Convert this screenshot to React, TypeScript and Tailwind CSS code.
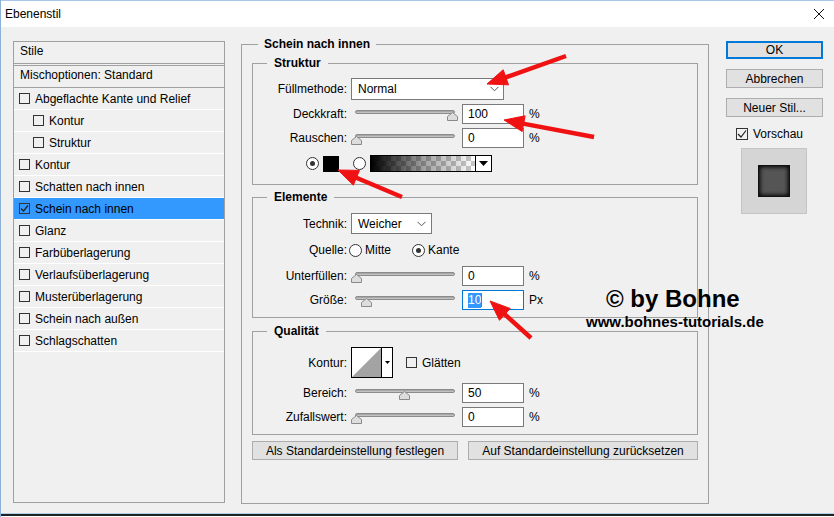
import React from 'react';

type StyleItem = { label: string; indent?: boolean; checked?: boolean; selected?: boolean };

const STYLES: StyleItem[] = [
  { label: 'Abgeflachte Kante und Relief' },
  { label: 'Kontur', indent: true },
  { label: 'Struktur', indent: true },
  { label: 'Kontur' },
  { label: 'Schatten nach innen' },
  { label: 'Schein nach innen', checked: true, selected: true },
  { label: 'Glanz' },
  { label: 'Farbüberlagerung' },
  { label: 'Verlaufsüberlagerung' },
  { label: 'Musterüberlagerung' },
  { label: 'Schein nach außen' },
  { label: 'Schlagschatten' },
];

// tail -> tip, in page pixels
const ARROWS = [
  { x1: 565, y1: 56, x2: 486, y2: 84 },
  { x1: 593, y1: 137, x2: 503, y2: 120 },
  { x1: 401, y1: 197, x2: 337, y2: 170 },
  { x1: 530, y1: 338, x2: 489, y2: 301 },
];

function Checkbox({ checked = false }: { checked?: boolean }) {
  return (
    <span className="flex h-[11px] w-[11px] shrink-0 items-center justify-center border border-[#333]">
      {checked && (
        <svg width="9" height="9" viewBox="0 0 9 9">
          <path d="M1 4.5 L3.5 7 L8 1.5" fill="none" stroke="#222" strokeWidth="1.2" />
        </svg>
      )}
    </span>
  );
}

function Radio({ checked = false }: { checked?: boolean }) {
  return (
    <span className="flex h-[13px] w-[13px] shrink-0 items-center justify-center rounded-full border border-[#333] bg-white">
      {checked && <span className="h-[5px] w-[5px] rounded-full bg-[#333]" />}
    </span>
  );
}

function Slider({ value }: { value: number }) {
  return (
    <div className="relative ml-[4px] h-[20px] w-[107px] shrink-0">
      <div className="absolute left-[4px] top-[6px] h-[4px] w-[100px] rounded-full border border-[#8c8c8c] bg-linear-to-b from-[#9a9a9a] to-[#cfcfcf]" />
      <svg
        className="absolute top-[8px]"
        style={{ left: (value / 100) * 96 }}
        width="11"
        height="9"
        viewBox="0 0 11 9"
      >
        <path d="M0.5 8.5 V4.5 L5.5 0.5 L10.5 4.5 V8.5 Z" fill="#dddddd" stroke="#8a8a8a" />
      </svg>
    </div>
  );
}

function NumField({ value, focused = false }: { value: string; focused?: boolean }) {
  return (
    <div
      className={`ml-[4px] flex h-[20px] w-[62px] shrink-0 items-center border bg-white pl-[5px] ${
        focused ? 'border-[#0078d7]' : 'border-[#7a7a7a]'
      }`}
    >
      {focused ? (
        <>
          <span className="bg-[#3399ff] leading-[15px] text-white">{value}</span>
          <span className="h-[14px] w-px bg-[#c06020]" />
        </>
      ) : (
        value
      )}
    </div>
  );
}

function SliderRow({
  label,
  value,
  unit,
  focused,
  className,
}: {
  label: string;
  value: number;
  unit: string;
  focused?: boolean;
  className: string;
}) {
  return (
    <div className={`flex h-[20px] items-center ${className}`}>
      <span className="w-[94px] shrink-0 text-right">{label}</span>
      <Slider value={value} />
      <NumField value={String(value)} focused={focused} />
      <span className="ml-[5px]">{unit}</span>
    </div>
  );
}

function Chevron() {
  return (
    <svg width="9" height="6" viewBox="0 0 9 6">
      <path d="M0.5 0.8 L4.5 4.8 L8.5 0.8" fill="none" stroke="#555" />
    </svg>
  );
}

function Legend({ children, outer = false }: { children: React.ReactNode; outer?: boolean }) {
  return (
    <legend className={`font-bold leading-[16px] ${outer ? 'ml-[16px] px-[6px]' : 'ml-[14px] px-[7px]'}`}>
      {children}
    </legend>
  );
}

function Button({ children, className }: { children: React.ReactNode; className: string }) {
  return (
    <div className={`flex h-[19px] items-center justify-center border border-[#adadad] bg-[#e1e1e1] ${className}`}>
      {children}
    </div>
  );
}

function StylesPanel() {
  return (
    <div className="mt-[5px] h-[462px] w-[212px] shrink-0 border border-[#a0a0a0] bg-[#f0f0f0]">
      <div className="flex h-[22px] items-center border-b border-[#a0a0a0] pb-[4px] pl-[6px]">Stile</div>
      <div className="mt-[1px] flex h-[23px] items-center border-y border-[#a0a0a0] pb-[4px] pl-[6px]">
        Mischoptionen: Standard
      </div>
      {STYLES.map((s, i) => (
        <div
          key={i}
          className={`flex h-[22px] items-center border-b border-white ${s.indent ? 'pl-[19px]' : 'pl-[5px]'} ${
            s.selected ? 'bg-[#3399ff]' : ''
          }`}
        >
          <Checkbox checked={s.checked} />
          <span className="ml-[5px]">{s.label}</span>
        </div>
      ))}
    </div>
  );
}

function Arrows() {
  return (
    <svg className="pointer-events-none absolute inset-0" width="834" height="517">
      {ARROWS.map((a, i) => {
        const dx = a.x2 - a.x1;
        const dy = a.y2 - a.y1;
        const len = Math.hypot(dx, dy);
        const ux = dx / len;
        const uy = dy / len;
        const bx = a.x2 - ux * 20;
        const by = a.y2 - uy * 20;
        const px = -uy * 8;
        const py = ux * 8;
        return (
          <g key={i} fill="#f01212" stroke="#f01212">
            <line x1={a.x1} y1={a.y1} x2={bx + ux * 2} y2={by + uy * 2} strokeWidth="4.5" />
            <polygon points={`${a.x2},${a.y2} ${bx + px},${by + py} ${bx - px},${by - py}`} strokeWidth="1" />
          </g>
        );
      })}
    </svg>
  );
}

export default function App() {
  return (
    <div className="relative h-[517px] w-[834px] overflow-hidden border-l border-[#8db2d8] font-['Liberation_Sans',Arial,sans-serif] text-[12px] leading-[14px] text-black">
      {/* title bar */}
      <div className="flex h-[27px] items-center justify-between border-t border-[#a9c8ea] bg-white pl-[4px] pr-[9px]">
        <span>Ebenenstil</span>
        <svg width="12" height="12" viewBox="0 0 12 12">
          <path d="M1 1 L11 11 M11 1 L1 11" stroke="#111" strokeWidth="1" />
        </svg>
      </div>

      {/* body */}
      <div className="flex h-[487px] items-start border-b border-[#b7cde3] bg-[#f0f0f0] pl-[12px] pt-[9px]">
        <StylesPanel />

        <fieldset className="ml-[16px] h-[468px] w-[468px] shrink-0 border border-[#a0a0a0]">
          <Legend outer>Schein nach innen</Legend>

          <fieldset className="ml-[10px] mt-[3px] w-[446px] border border-[#a0a0a0] pb-[12px]">
            <Legend>Struktur</Legend>
            <div className="mt-[7px] flex h-[22px] items-center">
              <span className="w-[94px] shrink-0 text-right">Füllmethode:</span>
              <div className="ml-[4px] flex h-[22px] w-[153px] items-center justify-between border border-[#7a7a7a] bg-white pl-[6px] pr-[4px]">
                <span>Normal</span>
                <Chevron />
              </div>
            </div>
            <SliderRow className="mt-[4px]" label="Deckkraft:" value={100} unit="%" />
            <SliderRow className="mt-[4px]" label="Rauschen:" value={0} unit="%" />
            <div className="mt-[7px] flex h-[17px] items-center pl-[53px]">
              <Radio checked />
              <span className="ml-[4px] h-[16px] w-[16px] bg-black" />
              <span className="ml-[14px]">
                <Radio />
              </span>
              <div className="ml-[4px] flex h-[17px] w-[122px] border border-black">
                <div className="flex-1 bg-[repeating-conic-gradient(#c9c9c9_0_25%,#ffffff_0_50%)] bg-[length:10px_10px]">
                  <div className="h-full w-full bg-linear-to-r from-black via-[#00000060] via-50% to-transparent" />
                </div>
                <div className="flex w-[16px] items-center justify-center border-l border-black bg-white">
                  <svg width="9" height="5" viewBox="0 0 9 5">
                    <path d="M0 0 H9 L4.5 5 Z" fill="#000" />
                  </svg>
                </div>
              </div>
            </div>
          </fieldset>

          <fieldset className="ml-[10px] mt-[4px] w-[446px] border border-[#a0a0a0] pb-[7px]">
            <Legend>Elemente</Legend>
            <div className="mt-[8px] flex h-[21px] items-center">
              <span className="w-[94px] shrink-0 text-right">Technik:</span>
              <div className="ml-[4px] flex h-[21px] w-[81px] items-center justify-between border border-[#7a7a7a] bg-white pl-[6px] pr-[5px]">
                <span>Weicher</span>
                <Chevron />
              </div>
            </div>
            <div className="mt-[7px] flex h-[18px] items-center">
              <span className="w-[94px] shrink-0 text-right">Quelle:</span>
              <span className="ml-[2px]">
                <Radio />
              </span>
              <span className="ml-[3px]">Mitte</span>
              <span className="ml-[21px]">
                <Radio checked />
              </span>
              <span className="ml-[3px]">Kante</span>
            </div>
            <SliderRow className="mt-[7px]" label="Unterfüllen:" value={0} unit="%" />
            <SliderRow className="mt-[4px]" label="Größe:" value={10} unit="Px" focused />
          </fieldset>

          <fieldset className="ml-[10px] mt-[5px] w-[446px] border border-[#a0a0a0] pb-[7px]">
            <Legend>Qualität</Legend>
            <div className="mt-[8px] flex h-[31px] items-center">
              <span className="w-[94px] shrink-0 text-right">Kontur:</span>
              <div className="ml-[4px] flex h-[31px] w-[42px] border border-black bg-white">
                <svg width="29" height="29" viewBox="0 0 29 29">
                  <path d="M0 29 L29 0 L29 29 Z" fill="#a3a3a3" />
                </svg>
                <div className="flex flex-1 items-center justify-center border-l border-black">
                  <svg width="5" height="3" viewBox="0 0 5 3">
                    <path d="M0 0 H5 L2.5 3 Z" fill="#000" />
                  </svg>
                </div>
              </div>
              <span className="ml-[13px]">
                <Checkbox />
              </span>
              <span className="ml-[5px]">Glätten</span>
            </div>
            <SliderRow className="mt-[5px]" label="Bereich:" value={50} unit="%" />
            <SliderRow className="mt-[4px]" label="Zufallswert:" value={0} unit="%" />
          </fieldset>

          <div className="ml-[10px] mt-[6px] flex gap-[10px]">
            <Button className="w-[206px]">Als Standardeinstellung festlegen</Button>
            <Button className="w-[230px]">Auf Standardeinstellung zurücksetzen</Button>
          </div>
        </fieldset>

        <div className="ml-[17px] mt-[5px] flex w-[97px] shrink-0 flex-col">
          <div className="flex h-[18px] items-center justify-center border-2 border-[#0078d7] bg-[#e1e1e1]">OK</div>
          <Button className="mt-[10px] h-[18px]">Abbrechen</Button>
          <Button className="mt-[10px] h-[18px]">Neuer Stil...</Button>
          <div className="mt-[10px] flex h-[13px] items-center pl-[10px]">
            <span className="h-[12px] w-[12px]">
              <span className="flex h-[12px] w-[12px] items-center justify-center border border-[#333]">
                <svg width="10" height="10" viewBox="0 0 10 10">
                  <path d="M1 5 L4 8 L9 1.5" fill="none" stroke="#222" strokeWidth="1.2" />
                </svg>
              </span>
            </span>
            <span className="ml-[5px]">Vorschau</span>
          </div>
          <div className="ml-[15px] mt-[8px] flex h-[66px] w-[66px] items-center justify-center border border-[#c4c4c4] bg-[#d5d5d5]">
            <div className="h-[32px] w-[32px] border border-[#111] bg-[#555555] shadow-[inset_0_0_4px_1px_#000]" />
          </div>
        </div>
      </div>
      <div className="h-[2px] bg-[#1b2424]" />

      {/* watermark */}
      <div className="absolute left-[605px] top-[287px] text-[24px] font-bold leading-none">© by Bohne</div>
      <div className="absolute left-[585px] top-[314px] text-[15px] font-bold leading-none">www.bohnes-tutorials.de</div>

      <Arrows />
    </div>
  );
}
